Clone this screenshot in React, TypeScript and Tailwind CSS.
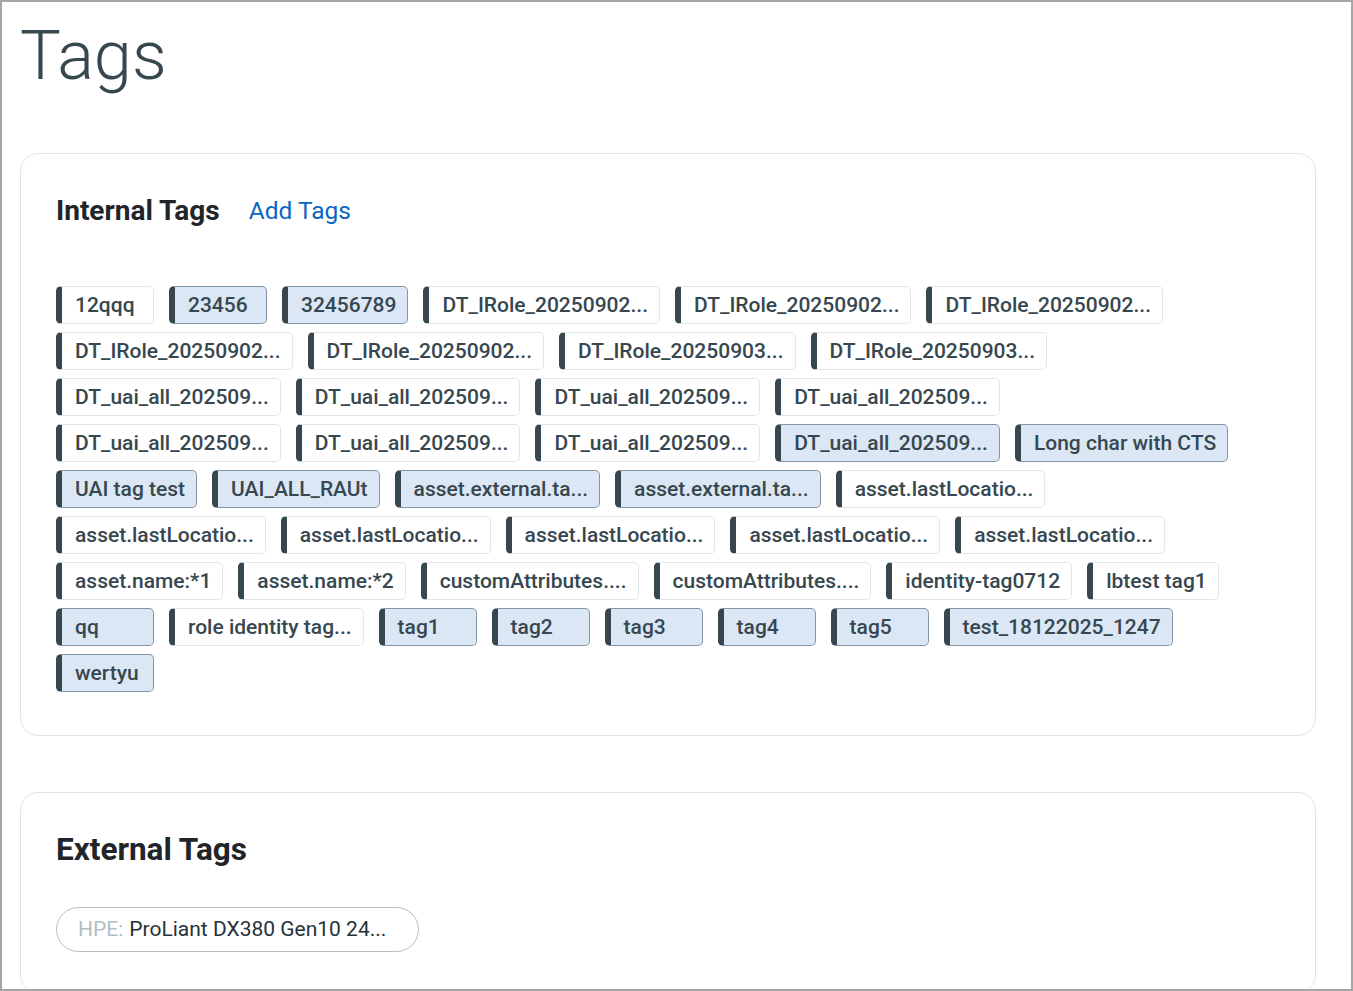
import React from 'react'

type Tag = { label: string; selected?: boolean }

const internalTags: Tag[] = [
    { label: '12qqq' },
    { label: '23456', selected: true },
    { label: '32456789', selected: true },
    { label: 'DT_IRole_20250902...' },
    { label: 'DT_IRole_20250902...' },
    { label: 'DT_IRole_20250902...' },
    { label: 'DT_IRole_20250902...' },
    { label: 'DT_IRole_20250902...' },
    { label: 'DT_IRole_20250903...' },
    { label: 'DT_IRole_20250903...' },
    { label: 'DT_uai_all_202509...' },
    { label: 'DT_uai_all_202509...' },
    { label: 'DT_uai_all_202509...' },
    { label: 'DT_uai_all_202509...' },
    { label: 'DT_uai_all_202509...' },
    { label: 'DT_uai_all_202509...' },
    { label: 'DT_uai_all_202509...' },
    { label: 'DT_uai_all_202509...', selected: true },
    { label: 'Long char with CTS', selected: true },
    { label: 'UAI tag test', selected: true },
    { label: 'UAI_ALL_RAUt', selected: true },
    { label: 'asset.external.ta...', selected: true },
    { label: 'asset.external.ta...', selected: true },
    { label: 'asset.lastLocatio...' },
    { label: 'asset.lastLocatio...' },
    { label: 'asset.lastLocatio...' },
    { label: 'asset.lastLocatio...' },
    { label: 'asset.lastLocatio...' },
    { label: 'asset.lastLocatio...' },
    { label: 'asset.name:*1' },
    { label: 'asset.name:*2' },
    { label: 'customAttributes....' },
    { label: 'customAttributes....' },
    { label: 'identity-tag0712' },
    { label: 'lbtest tag1' },
    { label: 'qq', selected: true },
    { label: 'role identity tag...' },
    { label: 'tag1', selected: true },
    { label: 'tag2', selected: true },
    { label: 'tag3', selected: true },
    { label: 'tag4', selected: true },
    { label: 'tag5', selected: true },
    { label: 'test_18122025_1247', selected: true },
    { label: 'wertyu', selected: true },
]

const TagChip = ({ label, selected }: Tag) => (
    <div
        className={`mr-[15px] mb-2 h-[38px] min-w-[98px] flex items-center rounded-[5px] border border-l-[6px] !border-l-[#37474f] pl-[13px] pr-[11px] text-[21px] leading-6 font-medium text-[#37474f] whitespace-nowrap ${selected ? 'bg-[#dbe7f5] border-[#8396a6]' : 'bg-white border-[#e3e6e8]'}`}
    >
        {label}
    </div>
)

export default function App() {
    return (
        <div className="w-[1353px] h-[991px] overflow-hidden border-2 border-[#a5a5a5] bg-white font-['Roboto',sans-serif]">
            <div className="pl-[18px] pr-[35px]">
                <h1 className="pt-[12px] text-[68.5px] leading-[84px] font-light text-[#37474f]">Tags</h1>

                <div className="mt-[55px] rounded-[18px] border border-[#e1e4e8] bg-white px-[35px] pt-[40px] pb-[35px]">
                    <div className="flex items-center gap-[29px]">
                        <h2 className="text-[28px] leading-[34px] font-bold text-[#212529]">Internal Tags</h2>
                        <button type="button" className="text-[24.5px] leading-[34px] text-[#0a66c2]">Add Tags</button>
                    </div>
                    <div className="mt-[58px] w-[1190px] flex flex-wrap">
                        {internalTags.map((t, i) => (
                            <TagChip key={i} label={t.label} selected={t.selected} />
                        ))}
                    </div>
                </div>

                <div className="mt-[56px] rounded-[18px] border border-[#e1e4e8] bg-white px-[35px] pt-[38px] pb-[40px]">
                    <h2 className="text-[31.5px] leading-[38px] font-bold text-[#212529]">External Tags</h2>
                    <div className="mt-[38px] w-[363px] h-[45px] flex items-center rounded-full border border-[#b3c0c8] pl-[21px] text-[21px] text-[#263238]">
                        <span className="text-[#b0bec5]">HPE:</span>
                        <span className="ml-[6px]">ProLiant DX380 Gen10 24...</span>
                    </div>
                </div>
            </div>
        </div>
    )
}
